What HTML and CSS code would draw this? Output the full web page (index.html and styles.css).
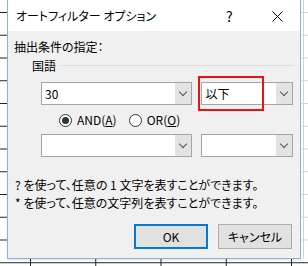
FILE: index.html
```html
<!DOCTYPE html>
<html lang="ja">
  <head>
    <meta charset="UTF-8" />
    <title>オートフィルター オプション</title>
    <link rel="stylesheet" href="styles.css">
  </head>
  <body>
    <div class="stage">
      <div class="dialog">
        <div class="titlebar">
          <span class="title">オートフィルター オプション</span>
          <span class="help">?</span>
          <span class="close">
            <svg width="11" height="11" viewBox="0 0 11 11">
              <path d="M0.5 0.5 L10.5 10.5 M10.5 0.5 L0.5 10.5" stroke="#000" stroke-width="1" fill="none" />
            </svg>
          </span>
        </div>

        <div class="content">
          <p class="caption">抽出条件の指定：</p>
          <div class="group-head">
            <span>国語</span>
            <span class="group-line"></span>
          </div>

          <div class="combo-row">
            <div class="combo wide">
              <span class="value">30</span>
              <span class="drop"><i></i></span>
            </div>
            <div class="combo narrow marked">
              <span class="value">以下</span>
              <span class="drop"><i></i></span>
            </div>
          </div>

          <div class="radios">
            <label class="radio checked"><span class="dot"></span><span>AND(<u>A</u>)</span></label>
            <label class="radio"><span class="dot"></span><span>OR(<u>O</u>)</span></label>
          </div>

          <div class="combo-row second">
            <div class="combo wide">
              <span class="value"></span>
              <span class="drop"><i></i></span>
            </div>
            <div class="combo narrow">
              <span class="value"></span>
              <span class="drop"><i></i></span>
            </div>
          </div>

          <p class="hint first">?&nbsp;を使って、任意の&nbsp;1&nbsp;文字を表すことができます。</p>
          <p class="hint">*&nbsp;を使って、任意の文字列を表すことができます。</p>

          <div class="buttons">
            <button class="btn default">OK</button>
            <button class="btn">キャンセル</button>
          </div>
        </div>
      </div>
      <div class="gridstrip"></div>
    </div>
  </body>
</html>
```

FILE: styles.css
```css
* {
  margin: 0;
  padding: 0;
  box-sizing: border-box;
}
body {
  width: 308px;
  height: 266px;
  overflow: hidden;
  font-family: "Noto Sans CJK JP", "Noto Sans", sans-serif;
  font-size: 12px;
  font-feature-settings: "palt";
  color: #000;
  background-color: #fff;
  background-image:
    linear-gradient(to right, #222 0 1px, transparent 1px),
    linear-gradient(to bottom, #222 0 1px, transparent 1px);
  background-size: 65.25px 100%, 100% 22.75px;
  background-position: 30px 0, 0 12px;
}
.stage {
  display: flex;
  padding-left: 7px;
  height: 259px;
}
.dialog {
  width: 294px;
  height: 259px;
  border: 1px solid #7fb5e8;
  border-top: none;
  background: #f0f0f0;
  display: flex;
  flex-direction: column;
  box-shadow: 1px 1px 2px rgba(0, 0, 0, 0.12);
}
.gridstrip {
  flex: 1;
  background-color: #fff;
  background-image:
    linear-gradient(to right, #d4d4d4 0 1px, transparent 1px),
    linear-gradient(to bottom, #d4d4d4 0 1px, transparent 1px);
  background-size: 100% 100%, 100% 22.75px;
  background-position: 2px 0, 0 12px;
  background-repeat: no-repeat, repeat;
}
.titlebar {
  height: 31px;
  background: #fff;
  display: flex;
  align-items: center;
  padding-left: 8px;
}
.title {
  flex: 1;
  font-size: 12px;
  line-height: 16px;
  margin-top: 1px;
}
.help {
  width: 12px;
  font-size: 14px;
  line-height: 16px;
  margin-right: 34px;
}
.close {
  display: flex;
  width: 11px;
  height: 11px;
  margin-right: 17px;
  margin-top: 1px;
}
.content {
  flex: 1;
  padding: 0 7px 8px 6px;
  display: flex;
  flex-direction: column;
}
.caption {
  margin-top: 8px;
  line-height: 16px;
}
.group-head {
  margin-top: 2px;
  padding-left: 18px;
  height: 16px;
  display: flex;
  align-items: center;
  gap: 5px;
}
.group-line {
  flex: 1;
  height: 1px;
  background: #dcdcdc;
}
.combo-row {
  display: flex;
  gap: 9px;
  margin-top: 9px;
  padding-left: 27px;
}
.combo-row.second {
  margin-top: 6px;
}
.combo {
  position: relative;
  height: 23px;
  border: 1px solid #a5a5a5;
  background: #fff;
  display: flex;
}
.combo.wide {
  width: 152px;
}
.combo.narrow {
  width: 92px;
}
.combo .value {
  flex: 1;
  padding-left: 3px;
  line-height: 21px;
}
.combo .drop {
  width: 16px;
  background: #e3e3e3;
  display: flex;
  align-items: center;
  justify-content: center;
}
.combo .drop i {
  width: 6px;
  height: 6px;
  border-right: 1px solid #555;
  border-bottom: 1px solid #555;
  transform: rotate(45deg);
  margin-top: -3px;
}
.combo.marked::after {
  content: "";
  position: absolute;
  left: -4px;
  top: -7px;
  width: 62px;
  height: 31px;
  border: 2px solid #ee1111;
}
.radios {
  display: flex;
  gap: 12px;
  margin-top: 7px;
  padding-left: 45px;
  height: 16px;
  align-items: center;
}
.radio {
  display: flex;
  align-items: center;
  gap: 5px;
  line-height: 16px;
}
.radio .dot {
  width: 13px;
  height: 13px;
  border: 1px solid #333;
  border-radius: 50%;
  background: #fff;
  display: flex;
  align-items: center;
  justify-content: center;
}
.radio.checked .dot::after {
  content: "";
  width: 7px;
  height: 7px;
  border-radius: 50%;
  background: #333;
}
.hint {
  padding-left: 1px;
  line-height: 18px;
}
.hint.first {
  margin-top: 19px;
}
.buttons {
  display: flex;
  justify-content: flex-end;
  gap: 10px;
  margin-top: 12px;
  margin-right: 1px;
}
.btn {
  width: 74px;
  height: 25px;
  font-family: inherit;
  font-size: 12px;
  font-feature-settings: "palt";
  color: #000;
  background: #e1e1e1;
  border: 1px solid #adadad;
}
.btn.default {
  border: 2px solid #0078d7;
}
```
